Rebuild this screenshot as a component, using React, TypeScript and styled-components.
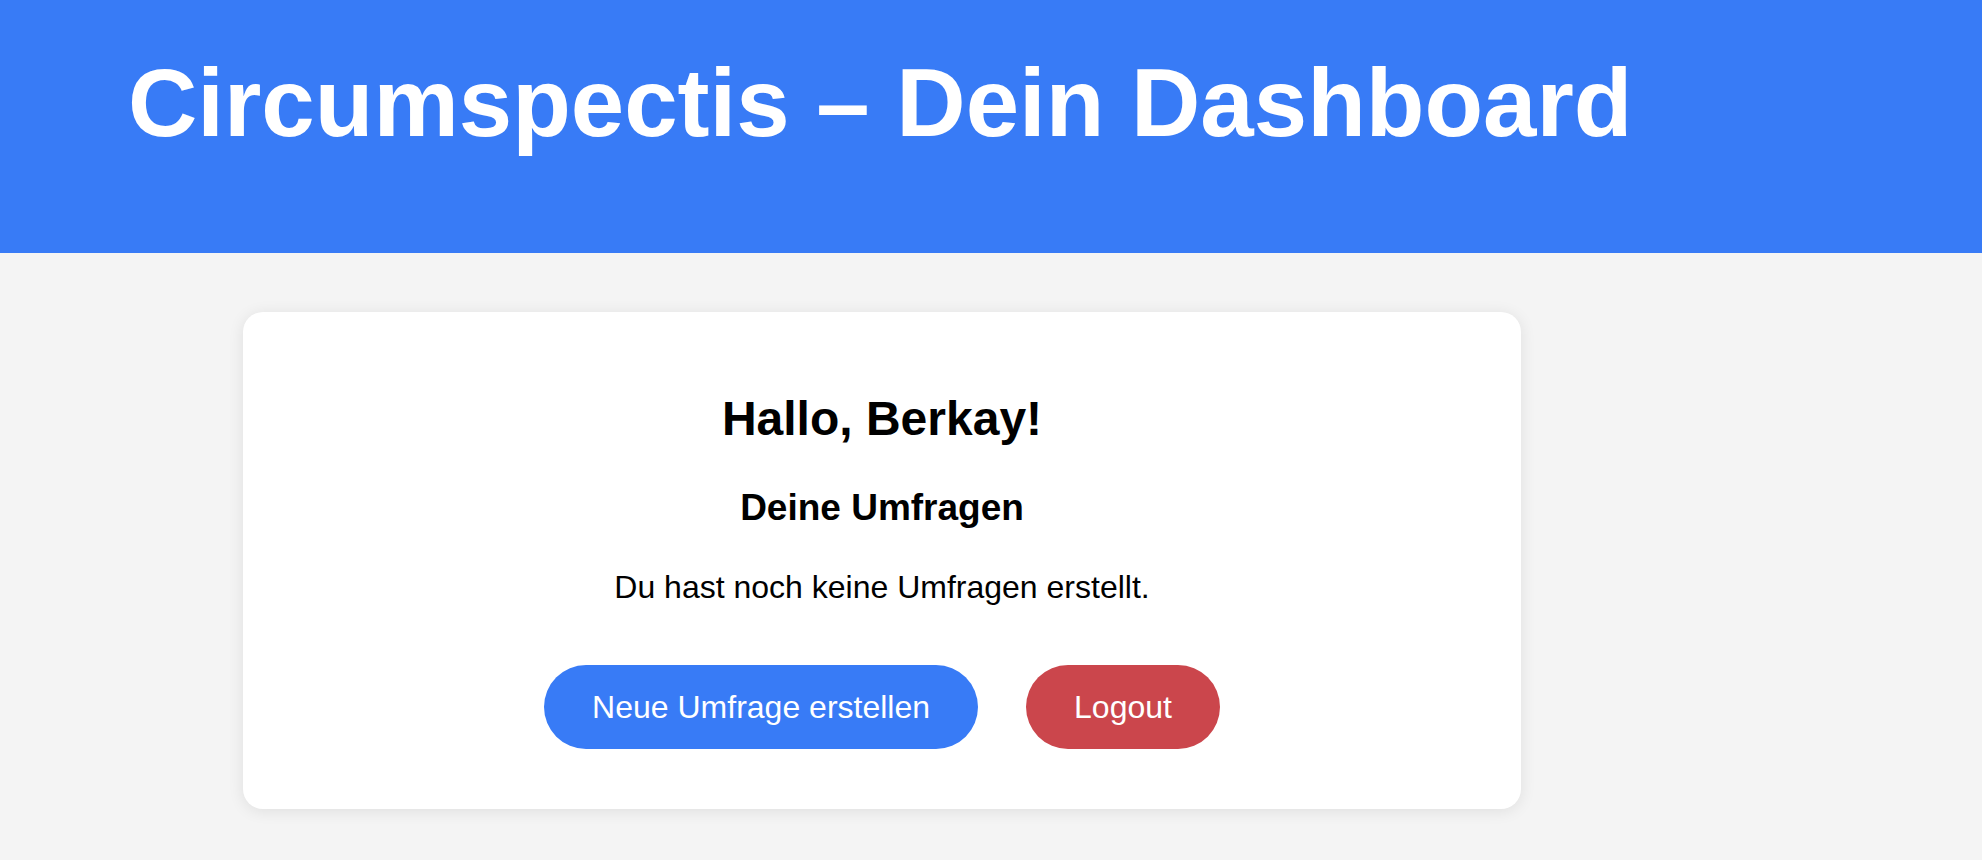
import { FC } from "react";
import styled, { createGlobalStyle } from "styled-components";

const GlobalStyle = createGlobalStyle`
  html, body {
    margin: 0;
    padding: 0;
    background: #f4f4f4;
    font-family: "Liberation Sans", Arial, Helvetica, sans-serif;
  }

  #root {
    min-height: 100vh;
  }
`;

const Header = styled.header`
  background: #387bf6;
  height: 253px;
  box-sizing: border-box;
  padding: 48px 0 0 128px;
`;

const Title = styled.h1`
  margin: 0;
  color: #ffffff;
  font-size: 96px;
  line-height: 1.15;
  font-weight: bold;
`;

const Main = styled.main`
  padding: 59px 0 50px 243px;
`;

const Card = styled.section`
  width: 1278px;
  box-sizing: border-box;
  background: #ffffff;
  border-radius: 20px;
  box-shadow: 0 2px 16px rgba(0, 0, 0, 0.09);
  padding: 78px 48px 60px;
  display: flex;
  flex-direction: column;
  align-items: center;
  text-align: center;
  color: #000000;
`;

const Greeting = styled.h2`
  margin: 0;
  font-size: 48px;
  line-height: 1.2;
  font-weight: bold;
`;

const SectionTitle = styled.h3`
  margin: 38px 0 0;
  font-size: 37px;
  line-height: 1.2;
  font-weight: bold;
`;

const EmptyText = styled.p`
  margin: 38px 0 0;
  font-size: 32px;
  line-height: 1.2;
`;

const Actions = styled.div`
  margin-top: 59px;
  display: flex;
  gap: 48px;
`;

const Button = styled.button<{ $variant?: "primary" | "danger" }>`
  border: none;
  border-radius: 50px;
  padding: 24px 48px;
  font-family: inherit;
  font-size: 32px;
  line-height: 36px;
  color: #ffffff;
  cursor: pointer;
  background: ${({ $variant }) => ($variant === "danger" ? "#cb464c" : "#387bf6")};
`;

const App: FC = () => (
  <>
    <GlobalStyle />
    <Header>
      <Title>Circumspectis – Dein Dashboard</Title>
    </Header>
    <Main>
      <Card>
        <Greeting>Hallo, Berkay!</Greeting>
        <SectionTitle>Deine Umfragen</SectionTitle>
        <EmptyText>Du hast noch keine Umfragen erstellt.</EmptyText>
        <Actions>
          <Button $variant="primary">Neue Umfrage erstellen</Button>
          <Button $variant="danger">Logout</Button>
        </Actions>
      </Card>
    </Main>
  </>
);

export default App;
